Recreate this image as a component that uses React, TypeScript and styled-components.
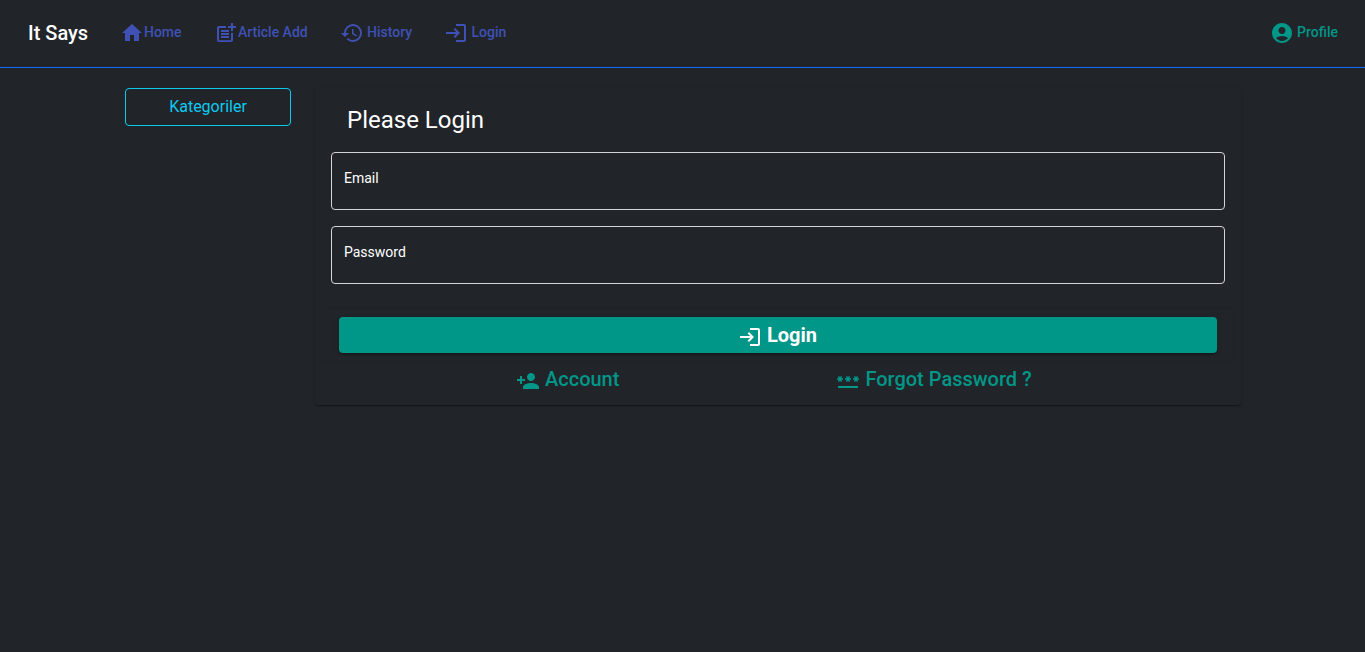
import React from "react";
import styled, { createGlobalStyle } from "styled-components";
import {
  MdHome,
  MdPostAdd,
  MdHistory,
  MdLogin,
  MdAccountCircle,
  MdPersonAdd,
  MdPassword,
} from "react-icons/md";

const GlobalStyle = createGlobalStyle`
  *, *::before, *::after { box-sizing: border-box; }
  body {
    margin: 0;
    min-height: 100vh;
    background: #212529;
    color: #fff;
    font-family: Roboto, sans-serif;
  }
  button { font-family: inherit; cursor: pointer; }
`;

const Toolbar = styled.header`
  display: flex;
  align-items: center;
  height: 68px;
  padding: 0 11px 2px 28px;
  border-bottom: 1px solid #0d6efd;
`;

const Brand = styled.span`
  width: 75.6px;
  font-size: 20px;
  font-weight: 500;
  line-height: 32px;
  white-space: nowrap;
`;

const Spacer = styled.div`
  flex: 1;
`;

const NavButton = styled.button<{ $color: string; $gap?: number }>`
  display: flex;
  align-items: center;
  gap: ${(p) => p.$gap ?? 0.4}px;
  height: 36px;
  padding: 0 16px;
  border: 0;
  background: transparent;
  color: ${(p) => p.$color};
  font-size: 14px;
  font-weight: 500;
  white-space: nowrap;

  svg { width: 24px; height: 24px; flex: none; }
  span { padding-bottom: 2px; }
`;

const Layout = styled.main`
  display: grid;
  grid-template-columns: 166px 926px;
  column-gap: 24px;
  align-items: start;
  padding: 20px 0 0 125px;
`;

const CategoryButton = styled.button`
  height: 38px;
  padding: 0 12px 2px;
  border: 1px solid #0dcaf0;
  border-radius: 4px;
  background: transparent;
  color: #0dcaf0;
  font-size: 16px;
`;

const Card = styled.section`
  height: 317px;
  padding: 16px;
  border-radius: 4px;
  box-shadow: 0 2px 1px -1px rgba(0, 0, 0, 0.2), 0 1px 1px rgba(0, 0, 0, 0.14),
    0 1px 3px rgba(0, 0, 0, 0.12);
`;

const CardTitle = styled.h1`
  margin: 0 0 16px;
  padding-left: 16px;
  font-size: 24px;
  font-weight: 400;
  line-height: 32px;
`;

const Field = styled.label`
  display: flex;
  align-items: center;
  height: 58px;
  margin-bottom: 16px;
  padding: 0 12px 6px;
  border: 1px solid #d3d4d5;
  border-radius: 4px;
  font-size: 14px;
`;

const Actions = styled.div`
  margin: 25px -8px 0;
  padding: 8px 16px;
  box-shadow: 0 0 1px rgba(0, 0, 0, 0.2);
`;

const SubmitButton = styled.button`
  display: flex;
  align-items: center;
  justify-content: center;
  gap: 5px;
  width: 100%;
  height: 36px;
  padding: 0 1px 0 0;
  border: 0;
  border-radius: 4px;
  background: #009688;
  color: #fff;
  font-size: 20px;
  font-weight: 700;
  box-shadow: 0 3px 1px -2px rgba(0, 0, 0, 0.2), 0 2px 2px rgba(0, 0, 0, 0.14),
    0 1px 5px rgba(0, 0, 0, 0.12);

  svg { width: 24px; height: 24px; margin-top: 3px; }
`;

const Links = styled.div`
  display: grid;
  grid-template-columns: 474px 1fr;
`;

const LinkButton = styled.button<{ $left: number }>`
  display: flex;
  align-items: center;
  gap: 5px;
  height: 36px;
  padding: 0 0 0 ${(p) => p.$left}px;
  border: 0;
  background: transparent;
  color: #009688;
  font-size: 20px;
  font-weight: 500;
  white-space: nowrap;

  svg { width: 24px; height: 24px; margin-top: 3px; }
`;

const INDIGO = "#3f51b5";
const TEAL = "#009688";

export default function App() {
  return (
    <>
      <GlobalStyle />
      <Toolbar>
        <Brand>It Says</Brand>
        <NavButton $color={INDIGO}><MdHome /><span>Home</span></NavButton>
        <NavButton $color={INDIGO}><MdPostAdd /><span>Article Add</span></NavButton>
        <NavButton $color={INDIGO} $gap={3.4}><MdHistory /><span>History</span></NavButton>
        <NavButton $color={INDIGO} $gap={3.4}><MdLogin /><span>Login</span></NavButton>
        <Spacer />
        <NavButton $color={TEAL} $gap={3.4}><MdAccountCircle /><span>Profile</span></NavButton>
      </Toolbar>
      <Layout>
        <CategoryButton>Kategoriler</CategoryButton>
        <Card>
          <CardTitle>Please Login</CardTitle>
          <Field>Email</Field>
          <Field>Password</Field>
          <Actions>
            <SubmitButton><MdLogin /><span>Login</span></SubmitButton>
          </Actions>
          <Links>
            <LinkButton $left={185}><MdPersonAdd /><span>Account</span></LinkButton>
            <LinkButton $left={31.4}><MdPassword /><span>Forgot Password ?</span></LinkButton>
          </Links>
        </Card>
      </Layout>
    </>
  );
}
